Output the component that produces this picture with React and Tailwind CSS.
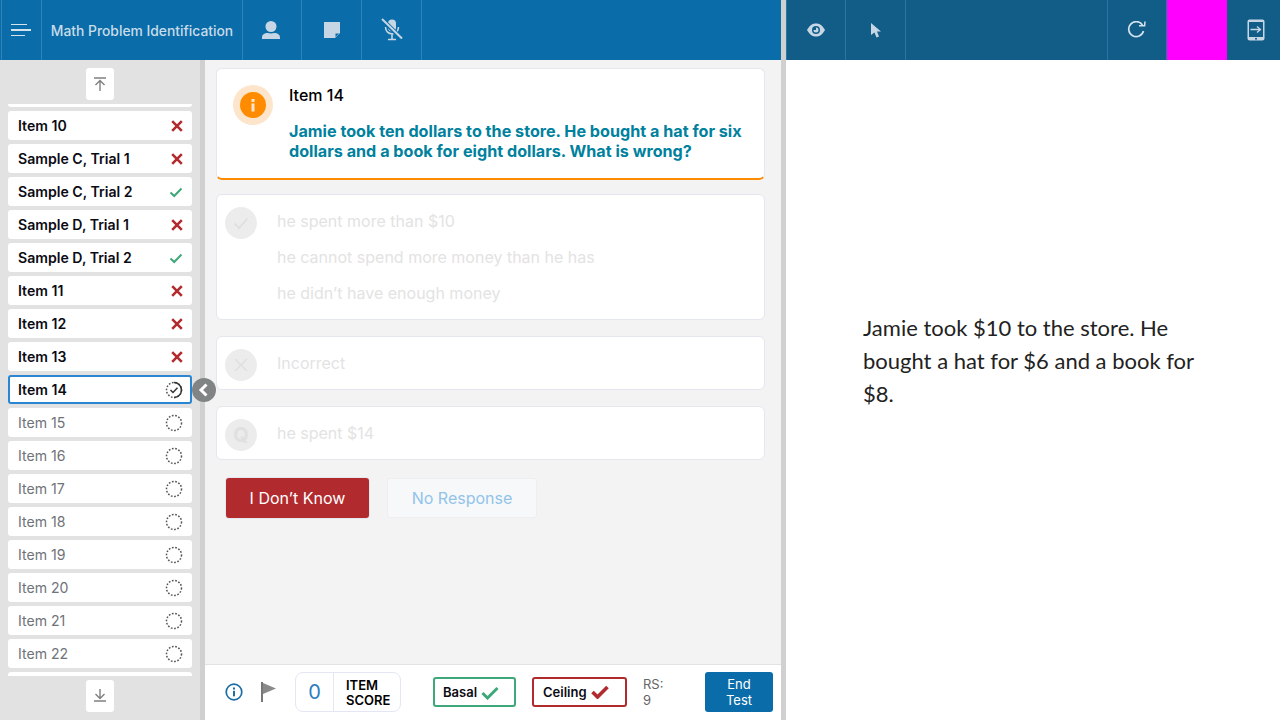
const items = [
  { name: '', status: 'none', done: true },
  { name: 'Item 10', status: 'wrong', done: true },
  { name: 'Sample C, Trial 1', status: 'wrong', done: true },
  { name: 'Sample C, Trial 2', status: 'right', done: true },
  { name: 'Sample D, Trial 1', status: 'wrong', done: true },
  { name: 'Sample D, Trial 2', status: 'right', done: true },
  { name: 'Item 11', status: 'wrong', done: true },
  { name: 'Item 12', status: 'wrong', done: true },
  { name: 'Item 13', status: 'wrong', done: true },
  { name: 'Item 14', status: 'current', done: true, active: true },
  { name: 'Item 15', status: 'todo' },
  { name: 'Item 16', status: 'todo' },
  { name: 'Item 17', status: 'todo' },
  { name: 'Item 18', status: 'todo' },
  { name: 'Item 19', status: 'todo' },
  { name: 'Item 20', status: 'todo' },
  { name: 'Item 21', status: 'todo' },
  { name: 'Item 22', status: 'todo' },
  { name: '', status: 'none' },
];

const StatusIcon = ({ status, active }) => {
  if (status === 'none') return null;
  if (status === 'wrong') {
    return (
      <svg width="18" height="18" viewBox="0 0 18 18" className="mr-[6px]">
        <path d="M4.2 4.2 L13.8 13.8 M13.8 4.2 L4.2 13.8" stroke="#b12b2e" strokeWidth="2.6" fill="none" />
      </svg>
    );
  }
  if (status === 'right') {
    return (
      <svg width="18" height="18" viewBox="0 0 18 18" className="mr-[7px]">
        <path d="M3.5 9.5 L7.2 13 L14.5 5.5" stroke="#3ea87a" strokeWidth="2" fill="none" />
      </svg>
    );
  }
  return (
    <svg width="18" height="18" viewBox="0 0 18 18" className={active ? 'mr-[7px]' : 'mr-[9px]'}>
      <circle cx="9" cy="9" r="7.5" stroke="#555" strokeWidth="1.5" strokeDasharray="1.7 1.6" fill="none" />
      {status === 'current' && (
        <>
          <path d="M9 1.5 A7.5 7.5 0 0 1 9 16.5" stroke="#333" strokeWidth="1.5" fill="none" />
          <path d="M5.5 9 L8 11.5 L12.5 6.8" stroke="#333" strokeWidth="1.5" fill="none" />
        </>
      )}
    </svg>
  );
};

const ItemRow = ({ item }) => (
  <div
    className={`flex h-[29px] shrink-0 items-center justify-between rounded-[3px] bg-white text-[14.1px] ${
      item.active ? 'border-2 border-[#2a86d0] pl-[8px]' : 'pl-[10px]'
    } ${item.done ? 'font-semibold text-[#0b0b14]' : 'text-[#6f7378]'}`}
  >
    <span>{item.name}</span>
    <StatusIcon status={item.status} active={item.active} />
  </div>
);

const HeaderCell = ({ children, className = '' }) => (
  <div className={`flex h-full items-center justify-center border-r border-[#2f83b8] ${className}`}>{children}</div>
);

const AnswerRow = ({ icon, lines }) => (
  <div className="flex rounded-md border border-[#e4e7ef] bg-white py-[14px] pl-2">
    <div className="-mb-[6px] -mt-[2px] flex h-8 w-8 shrink-0 items-center justify-center rounded-full bg-[#ececec]">{icon}</div>
    <div className="ml-5 flex flex-col gap-[12px] text-base text-[#e3e3e3]">
      {lines.map((line) => (
        <div key={line} className="flex h-6 items-center leading-6">
          {line}
        </div>
      ))}
    </div>
  </div>
);

export default function App() {
  return (
    <div className="flex h-[720px] w-[1280px] overflow-hidden bg-white font-['Inter',sans-serif]">
      {/* Left panel */}
      <div className="flex w-[781px] shrink-0 flex-col">
        <div className="flex h-[60px] shrink-0 items-stretch bg-[#0a6ca8] pl-px text-[#c9dcea]">
          <div className="flex h-full w-[41px] flex-col justify-center gap-[4px] border-x border-[#2f83b8] pl-[9px]">
            <div className="h-[1.5px] w-[16px] bg-[#d5e3ee]" />
            <div className="h-[1.5px] w-[20px] bg-[#d5e3ee]" />
            <div className="h-[1.5px] w-[14px] bg-[#d5e3ee]" />
          </div>
          <HeaderCell className="w-[201px] pt-[2px] text-[13.85px] font-medium">Math Problem Identification</HeaderCell>
          <HeaderCell className="w-[59px]">
            <svg width="20" height="20" viewBox="0 0 20 20" fill="#c6d6e4" className="-ml-[2px]">
              <circle cx="10" cy="6.5" r="5.5" />
              <path d="M1 19 V17.5 C1 14.5 3.5 13 6.5 13 C8.5 13.6 11.5 13.6 13.5 13 C16.5 13 19 14.5 19 17.5 V19 Z" />
            </svg>
          </HeaderCell>
          <HeaderCell className="w-[60px]">
            <svg width="16" height="16" viewBox="0 0 16 16">
              <path d="M0 0 H16 V11 L11 16 H0 Z" fill="#c6d6e4" />
              <path d="M11.5 11.5 H15 L11.5 15 Z" fill="#0a6ca8" />
            </svg>
          </HeaderCell>
          <HeaderCell className="w-[60px]">
            <svg width="26" height="24" viewBox="0 0 26 24" fill="none">
              <rect x="9" y="1.5" width="8" height="12" rx="4" fill="#c6d6e4" />
              <path d="M6.5 9 C6.5 18 19.5 18 19.5 9 M13 16 V21 M9 21.5 H17" stroke="#c6d6e4" strokeWidth="1.6" />
              <path d="M3 1.5 L23 21" stroke="#0a6ca8" strokeWidth="4.5" />
              <path d="M3 1 L23 20.5" stroke="#c6d6e4" strokeWidth="2" />
            </svg>
          </HeaderCell>
        </div>

        <div className="relative flex min-h-0 flex-1">
          {/* Sidebar */}
          <div className="flex w-[205px] shrink-0 flex-col border-r-[5px] border-[#d0d0d0] bg-[#e2e2e2]">
            <div className="flex h-[44px] shrink-0 justify-center pt-2">
              <button className="flex h-8 w-7 items-center justify-center rounded-[3px] bg-white">
                <svg width="14" height="14" viewBox="0 0 14 14" fill="none" stroke="#808080" strokeWidth="1.4">
                  <path d="M1 1 H13 M7 14 V3.5 M2.5 8 L7 3.5 L11.5 8" />
                </svg>
              </button>
            </div>
            <div className="h-[572px] shrink-0 overflow-hidden px-2">
              <div className="-mt-[26px] flex flex-col gap-1">
                {items.map((item, idx) => (
                  <ItemRow key={idx} item={item} />
                ))}
              </div>
            </div>
            <div className="flex flex-1 justify-center pt-1">
              <button className="flex h-8 w-7 items-center justify-center rounded-[3px] bg-white">
                <svg width="14" height="14" viewBox="0 0 14 14" fill="none" stroke="#808080" strokeWidth="1.4">
                  <path d="M1 12 H13 M7 0 V9.5 M2.5 5 L7 9.5 L11.5 5" />
                </svg>
              </button>
            </div>
          </div>

          {/* Collapse handle */}
          <div className="absolute left-[192px] top-[318px] flex h-6 w-6 items-center justify-center rounded-full bg-[#808484]">
            <svg width="14" height="14" viewBox="0 0 14 14" fill="none" stroke="#fff" strokeWidth="3">
              <path d="M9.5 1.5 L4 7 L9.5 12.5" />
            </svg>
          </div>

          {/* Main */}
          <div className="flex min-w-0 flex-1 flex-col bg-[#f3f3f4]">
            <div className="flex flex-1 flex-col gap-4 pl-[11px] pr-4 pt-2">
              <div className="-mb-[2px] flex h-[112px] rounded-md border border-[#e4e7ef] border-b-2 border-b-[#ff8c00] bg-white pl-4 pt-4">
                <div className="flex h-10 w-10 shrink-0 items-center justify-center rounded-full bg-[#fde5cc]">
                  <div className="flex h-[26px] w-[26px] items-center justify-center rounded-full bg-[#ff8c00]">
                    <svg width="6" height="14" viewBox="0 0 6 14" fill="#fde5cc">
                      <rect x="1.5" y="1" width="3" height="3" />
                      <rect x="1.5" y="5.5" width="3" height="8" />
                    </svg>
                  </div>
                </div>
                <div className="ml-4 flex w-[470px] flex-col">
                  <div className="text-base font-medium leading-5 text-black">Item 14</div>
                  <div className="mt-4 text-[16.17px] font-bold leading-5 text-[#00819e]">
                    Jamie took ten dollars to the store. He bought a hat for six dollars and a book for eight dollars. What is wrong?
                  </div>
                </div>
              </div>

              <AnswerRow
                icon={
                  <svg width="18" height="18" viewBox="0 0 18 18" fill="none" stroke="#dedede" strokeWidth="1.6">
                    <path d="M2.5 9.5 L7 14 L15.5 4.5" />
                  </svg>
                }
                lines={['he spent more than $10', 'he cannot spend more money than he has', 'he didn’t have enough money']}
              />
              <AnswerRow
                icon={
                  <svg width="16" height="16" viewBox="0 0 16 16" fill="none" stroke="#dedede" strokeWidth="1.4">
                    <path d="M2 2 L14 14 M14 2 L2 14" />
                  </svg>
                }
                lines={['Incorrect']}
              />
              <AnswerRow icon={<span className="text-xl font-bold text-[#e0e0e0]">Q</span>} lines={['he spent $14']} />

              <div className="mt-[2px] flex gap-[18px] pl-[10px]">
                <button className="h-10 w-[143px] rounded-[3px] bg-[#b12b2e] text-base text-white shadow-[0_0_0_1px_#e6e8ee]">
                  I Don’t Know
                </button>
                <button className="h-10 w-[150px] rounded-[3px] border border-[#eceef0] bg-[#f7f8f9] text-base text-[#92c4ea]">
                  No Response
                </button>
              </div>
            </div>

            {/* Footer */}
            <div className="flex h-[56px] shrink-0 items-center border-t border-[#e2e2e2] bg-white pb-px pl-5">
              <svg width="18" height="18" viewBox="0 0 18 18" fill="none" className="mr-[17px]">
                <circle cx="9" cy="9" r="7.8" stroke="#1c6ea4" strokeWidth="1.7" />
                <rect x="8" y="4.5" width="2" height="2" fill="#1c6ea4" />
                <rect x="8" y="7.8" width="2" height="5.5" fill="#1c6ea4" />
              </svg>
              <svg width="18" height="20" viewBox="0 0 18 20" className="mr-[17px]">
                <path d="M2 0 V20" stroke="#777" strokeWidth="2" />
                <path d="M3 1 L16 6.5 L3 12 Z" fill="#8a8a8a" />
              </svg>
              <div className="flex h-10 w-[106px] rounded-lg border border-[#e4e7f3]">
                <div className="flex w-[38px] items-center justify-center border-r border-[#e4e7f3] text-xl text-[#2a7ec0]">0</div>
                <div className="pl-3 pt-[5px] text-[13px] font-semibold leading-[15px] text-black">
                  ITEM
                  <br />
                  SCORE
                </div>
              </div>
              <div className="ml-8 flex h-[30px] w-[83px] items-center rounded-[3px] border-2 border-[#3ea87a] pl-2 pt-px text-[13px] font-semibold text-[#0b0b14]">
                Basal
                <svg width="18" height="14" viewBox="0 0 18 14" fill="none" className="ml-[4px]" stroke="#3ea87a" strokeWidth="3">
                  <path d="M1.5 7 L6.5 12 L16.5 2" />
                </svg>
              </div>
              <div className="ml-4 flex h-[30px] w-[95px] items-center rounded-[3px] border-2 border-[#b12b2e] pl-[9px] pt-px text-[13px] font-semibold text-[#0b0b14]">
                Ceiling
                <svg width="18" height="14" viewBox="0 0 18 14" fill="none" className="-mt-[2px] ml-[4px]" stroke="#b12b2e" strokeWidth="3.6">
                  <path d="M1.5 7 L6.5 12 L16.5 2" />
                </svg>
              </div>
              <div className="ml-4 w-[62px] text-[13px] leading-4 text-[#666]">
                RS:
                <br />9
              </div>
              <button className="h-10 w-[68px] rounded-[3px] bg-[#0a6ca8] text-[13px] leading-4 text-white">
                End
                <br />
                Test
              </button>
            </div>
          </div>
        </div>
      </div>

      {/* Right panel */}
      <div className="flex min-w-0 flex-1 flex-col border-l-[5px] border-[#d0d0d0]">
        <div className="flex h-[60px] shrink-0 items-stretch bg-[#125c88] text-[#c6d6e4]">
          <div className="flex w-[60px] items-center justify-center border-x border-[#2a75a5]">
            <svg width="18" height="14" viewBox="0 0 18 14">
              <path d="M0 7 C3 1.5 6 0.5 9 0.5 C12 0.5 15 1.5 18 7 C15 12.5 12 13.5 9 13.5 C6 13.5 3 12.5 0 7 Z" fill="#c6d6e4" />
              <circle cx="9" cy="7" r="4" fill="#125c88" />
              <path d="M9 4.5 A2.5 2.5 0 1 1 6.5 7 H9 Z" fill="#c6d6e4" />
            </svg>
          </div>
          <div className="flex w-[60px] items-center justify-center border-r border-[#2a75a5]">
            <svg width="12" height="16" viewBox="0 0 12 16" fill="#c6d6e4">
              <path d="M1 1 L11 9.5 H7 L9 14.5 L6.5 15.5 L4.5 10.5 L1 13 Z" />
            </svg>
          </div>
          <div className="flex-1" />
          <div className="flex w-[60px] items-center justify-center border-x border-[#2a75a5]">
            <svg width="20" height="18" viewBox="0 0 20 18" fill="none" stroke="#d5e3ee" strokeWidth="1.7">
              <path d="M15.5 4 A7.5 7.5 0 1 0 16.5 10" />
              <path d="M12 4.8 L17.6 4.8 L18 0.5" strokeWidth="1.5" />
            </svg>
          </div>
          <div className="w-[60px] bg-[#ff00ff]" />
          <div className="flex w-[53px] items-center justify-center pl-[5px]">
            <svg width="18" height="22" viewBox="0 0 18 22">
              <rect x="0.5" y="0.5" width="17" height="21" rx="2" fill="#c6d6e4" />
              <rect x="2" y="3" width="14" height="15" fill="#125c88" />
              <circle cx="9" cy="19.8" r="1" fill="#125c88" />
              <path d="M3.5 10.5 H13 M10 7.5 L13.5 10.5 L10 13.5" stroke="#c6d6e4" strokeWidth="1.3" fill="none" />
            </svg>
          </div>
        </div>
        <div className="flex-1 pl-[77px] pt-[251px]">
          <p className="w-[345px] font-['Lato',sans-serif] text-[22px] leading-[33px] text-[#222]">
            Jamie took $10 to the store. He bought a hat for $6 and a book for $8.
          </p>
        </div>
      </div>
    </div>
  );
}
